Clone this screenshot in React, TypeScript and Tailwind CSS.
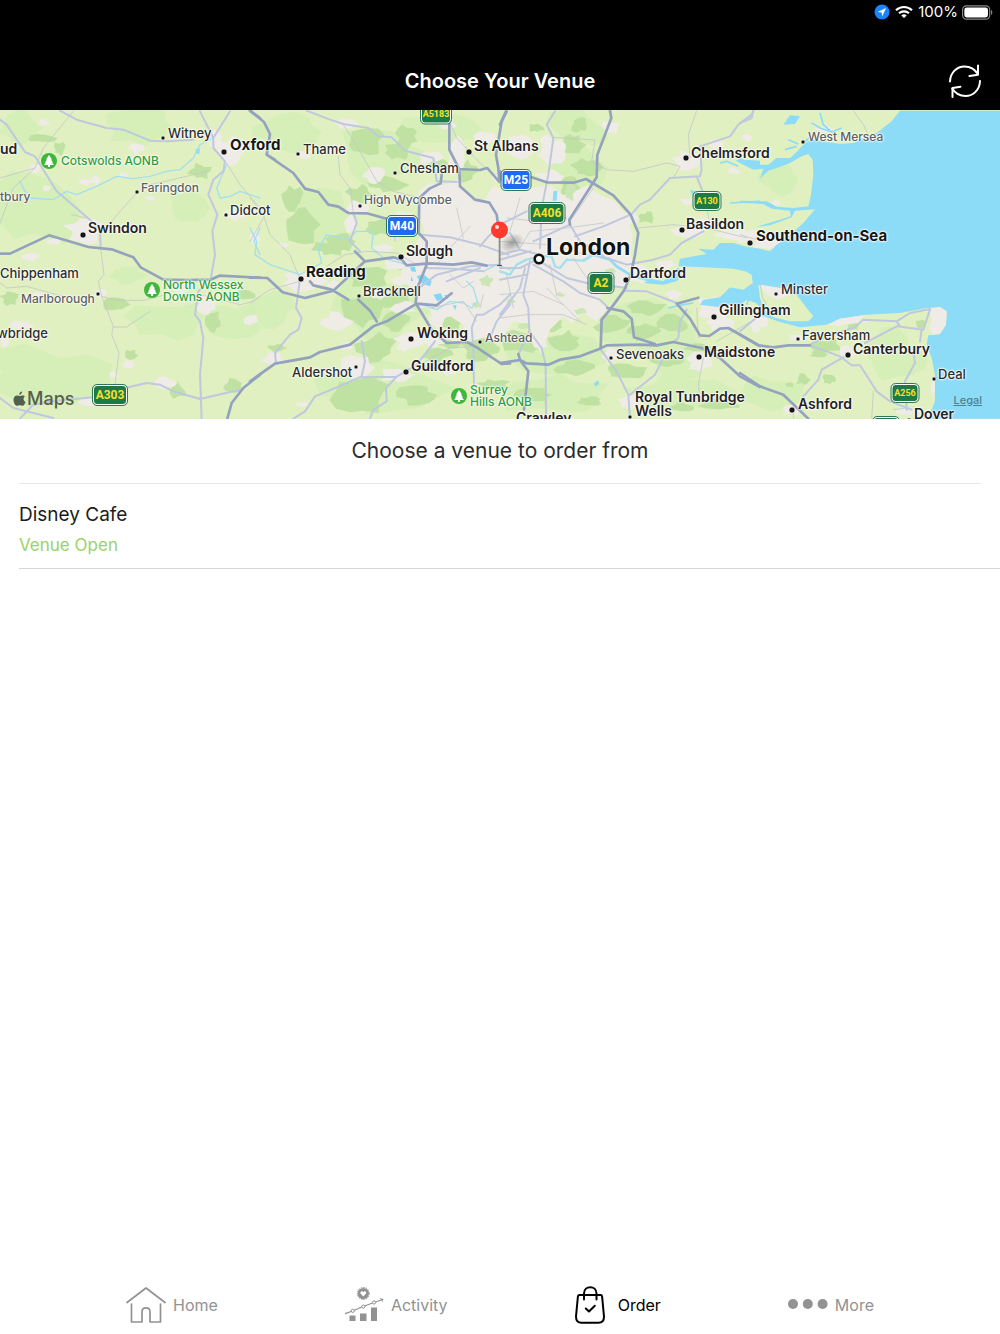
import type { ReactNode } from "react";

type Blob = [cx: number, cy: number, rx: number, ry: number];

/* Each tile is drawn on a grid three times finer than the map itself. */
const TILE_X = [0, 250, 500, 740];

function Tile({ n, children }: { n: number; children: ReactNode }) {
  return <g transform={`translate(${TILE_X[n]} -2) scale(0.33333)`}>{children}</g>;
}

function blobPath([cx, cy, rx, ry]: Blob, i: number) {
  const pts: string[] = [];
  const count = 13;
  for (let k = 0; k < count; k++) {
    const a = (k / count) * Math.PI * 2;
    const noise = Math.abs(Math.sin((i + 3) * 12.9898 + k * 78.233 + cx) * 43758.5453) % 1;
    const r = 0.6 + 0.6 * noise;
    pts.push(`${Math.round(cx + Math.cos(a) * rx * r)},${Math.round(cy + Math.sin(a) * ry * r)}`);
  }
  return `M${pts.join("L")}Z`;
}

function Blobs({ items, fill, opacity = 1 }: { items: Blob[]; fill: string; opacity?: number }) {
  return <path d={items.map(blobPath).join("")} fill={fill} opacity={opacity} />;
}

const MEADOW: Blob[][] = [
  [[90, 300, 150, 110], [160, 810, 220, 100], [420, 60, 120, 60], [520, 640, 130, 60], [60, 60, 60, 60], [380, 500, 60, 30], [700, 640, 90, 60], [560, 300, 60, 60]],
  [[120, 70, 120, 60], [560, 60, 130, 50], [210, 330, 110, 90], [60, 600, 90, 60], [400, 140, 140, 90], [400, 600, 170, 110], [420, 840, 200, 90]],
  [[230, 60, 90, 60], [230, 180, 80, 90], [200, 740, 170, 70], [440, 640, 170, 70], [520, 720, 120, 90], [560, 860, 180, 60], [160, 860, 160, 60]],
  [[120, 210, 70, 50], [460, 740, 90, 80], [80, 860, 110, 60]],
];

const FOREST: Blob[][] = [
  [[600, 190, 35, 24], [350, 590, 40, 22], [395, 742, 18, 20], [130, 90, 50, 12], [30, 570, 30, 24], [640, 640, 26, 34], [530, 850, 26, 26], [700, 835, 30, 22], [740, 560, 40, 16], [180, 120, 18, 22]],
  [
    [350, 100, 55, 40], [470, 85, 34, 32], [130, 270, 34, 40], [160, 350, 50, 60], [270, 400, 45, 32], [330, 260, 40, 28], [420, 230, 60, 26],
    [440, 130, 40, 26], [560, 170, 30, 16], [390, 360, 40, 24], [240, 420, 50, 24], [350, 510, 60, 40], [330, 610, 70, 50], [440, 570, 45, 40],
    [380, 720, 60, 46], [330, 860, 90, 60], [440, 640, 40, 30], [600, 640, 46, 30], [560, 740, 46, 26], [500, 860, 60, 30], [700, 720, 60, 40],
    [590, 700, 50, 22], [650, 190, 34, 34], [730, 830, 50, 18], [80, 720, 30, 12], [460, 470, 30, 16],
  ],
  [
    [220, 110, 34, 34], [260, 180, 44, 32], [210, 240, 30, 36], [240, 50, 30, 22], [440, 330, 24, 18], [60, 700, 60, 40], [200, 700, 50, 30],
    [340, 650, 60, 26], [440, 600, 60, 22], [520, 650, 50, 30], [430, 670, 50, 26], [220, 780, 60, 22], [380, 790, 60, 22], [600, 720, 46, 14],
    [500, 760, 50, 20], [100, 860, 60, 22], [270, 880, 40, 16], [160, 650, 30, 20], [550, 900, 40, 16], [110, 60, 24, 14], [660, 890, 60, 18],
  ],
  [[260, 715, 44, 24], [340, 655, 22, 12], [190, 815, 24, 18], [268, 812, 20, 18], [240, 740, 30, 12], [540, 650, 16, 14], [150, 830, 14, 8]],
];

const TOWN: Blob[][] = [
  [
    [255, 365, 60, 46], [690, 130, 40, 44], [640, 90, 24, 26], [410, 120, 22, 18], [285, 215, 16, 14], [255, 222, 18, 10], [370, 200, 16, 10],
    [105, 180, 22, 14], [140, 240, 14, 10], [85, 447, 30, 12], [160, 400, 22, 10], [490, 825, 36, 18], [620, 590, 34, 30], [755, 635, 26, 18],
    [385, 770, 18, 14], [60, 650, 44, 12], [270, 880, 40, 18], [300, 560, 20, 14], [700, 320, 34, 18], [130, 45, 24, 10], [340, 800, 14, 12],
    [120, 560, 22, 8], [450, 270, 16, 8], [540, 545, 24, 10], [15, 700, 20, 20],
  ],
  [
    [160, 520, 70, 34], [480, 460, 80, 30], [460, 600, 40, 20],
    [260, 640, 50, 30], [320, 780, 60, 40], [480, 700, 50, 32], [440, 800, 50, 24], [70, 755, 36, 22], [330, 300, 44, 22], [370, 200, 34, 24],
    [620, 140, 34, 60], [540, 150, 40, 18], [290, 50, 34, 18], [160, 140, 24, 14], [590, 50, 34, 16], [300, 350, 20, 30], [550, 700, 40, 16],
    [15, 390, 16, 26], [700, 90, 34, 26], [400, 420, 36, 14], [390, 560, 30, 14], [290, 715, 22, 12], [160, 890, 20, 8], [600, 790, 30, 14], [100, 410, 16, 8],
    [450, 520, 30, 14], [250, 530, 26, 12], [460, 330, 40, 20], [560, 640, 30, 20], [620, 690, 40, 14],
  ],
  [
    [400, 500, 50, 30], [160, 130, 46, 50], [60, 110, 50, 40], [330, 60, 30, 20], [560, 160, 40, 34], [650, 110, 24, 16], [560, 370, 50, 20], [610, 350, 34, 18],
    [640, 600, 60, 36], [660, 650, 40, 24], [600, 760, 44, 34], [330, 740, 24, 24], [390, 880, 34, 24], [120, 700, 24, 34], [560, 280, 20, 12],
    [390, 330, 24, 22], [520, 560, 30, 14], [700, 380, 50, 14], [500, 470, 30, 14], [700, 190, 20, 10], [20, 210, 40, 24], [150, 205, 40, 20],
  ],
  [
    [15, 385, 50, 24], [80, 408, 44, 16], [320, 730, 26, 22], [155, 905, 30, 20], [50, 640, 30, 30], [170, 690, 30, 12], [110, 285, 14, 10], [500, 910, 30, 14],
    [578, 840, 8, 30], [320, 640, 60, 10], [20, 90, 16, 14], [220, 900, 20, 10], [250, 65, 30, 12],
  ],
];

const MOTORWAYS: string[] = [
  "M0,437 L30,437 147,382 265,417 335,424 400,448 422,478 490,515 560,516 632,515 658,503 780,509 M780,800 L730,840 695,885 682,932 M750,8 L780,30",
  "M0,8 L42,42 60,78 50,140 130,195 165,242 205,252 235,290 265,296 295,315 350,316 410,332 M0,509 L52,510 98,553 165,570 250,548 345,460 430,448 455,455 470,472 535,466 610,470 665,463 710,473 M50,140 L75,155 M180,520 L190,532 245,545 295,575 M315,430 L345,460 M0,820 L75,767 180,748 210,732 300,710 370,655 410,640 500,587 560,592 605,556 M325,575 L360,608 380,640 M598,40 L598,125 628,185 630,235 675,275 718,284 740,320 745,355 M628,183 L690,186 712,180 748,222 745,180 738,140 755,40 770,10 M575,200 L572,226 538,242 508,270 506,375 530,400 530,470 502,540 497,585 545,665 590,705 650,702 680,718 755,768 780,766",
  "M0,765 L60,756 80,766 145,770 180,755 240,745 300,722 320,712 420,710 470,712 520,702 605,720 M55,738 L60,756 85,790 72,905 M95,208 L140,223 220,224 258,213 340,262 392,320 415,375 405,440 392,500 372,548 330,605 305,635 302,720 M330,8 L334,30 292,140 290,208 208,335 210,350 M322,600 L370,610 395,632 402,688 465,708 M530,587 L595,569 M530,587 L570,632 600,682 628,684 660,662 685,660 780,714 M605,720 L660,750 720,805 780,837 M0,50 L18,10 M0,190 L5,215",
  "M0,680 L55,712 100,718 145,712 210,712 M0,795 L60,835 130,860 205,932",
];

const MAIN_ROADS: string[] = [
  "M0,35 L20,50 75,132 105,145 130,185 170,250 275,340 300,370 302,420 M605,932 L600,800 610,690 600,640 585,620 595,550 632,515 645,440 637,370 652,320 625,260 640,215 670,190 675,160 640,120 640,90 600,10 M690,10 L640,90 M180,8 L230,35 320,60 370,65 450,98 M450,98 L500,100 580,95 M385,838 L440,825 480,830 520,850 600,873 720,845 M60,932 L100,890 150,880 280,868 M0,870 L40,900 160,930",
  "M170,8 L240,35 280,48 355,60 385,85 425,88 465,128 550,150 560,220 620,222 M330,430 L300,400 320,345 310,315 M150,515 L138,600 155,630 145,665 120,680 75,735 78,765 M335,700 L345,760 335,805 280,830 195,865 165,910 130,932 M335,808 L440,806 500,770 555,700 M440,806 L408,840 410,880 370,905 360,932 M670,720 L672,830 M510,380 L600,388 690,410 775,440 M690,415 L720,380 755,350 M500,545 L560,500 660,475 750,470 M590,520 L690,480 M780,560 L750,590 700,620 680,620 665,660 670,720 M530,480 L610,482 700,490 M780,590 L740,640 720,690",
  "M165,10 L140,50 160,90 145,200 125,300 120,420 M0,350 L80,310 M0,440 L60,425 120,440 M30,375 L60,425 M120,460 L200,510 260,525 380,540 M100,470 L190,520 240,555 300,575 325,600 M90,460 L70,560 85,600 88,670 55,740 M88,670 L125,720 137,770 138,932 M75,480 L60,540 0,620 M210,350 L240,400 320,450 380,470 460,455 510,440 545,405 610,370 M225,385 L310,355 392,320 M210,350 L100,400 M395,318 L420,290 450,275 510,210 600,205 605,185 600,115 M600,115 L690,85 715,50 755,20 760,8 M590,205 L612,260 M380,548 L440,550 530,585 M560,605 L540,640 535,690 520,702 M300,722 L350,790 385,860 390,932 M390,860 L465,800 490,750 M0,480 L60,480 110,455 M0,515 L80,500 M0,455 L90,430",
  "M210,710 L260,685 340,660 370,635 470,640 510,615 570,603 M375,705 L470,655 550,665 570,605 M470,640 L480,655 M545,665 L540,700 M210,712 L300,745 335,772 360,772 410,850 450,880 515,905 M500,905 L495,820 525,765 518,720 M310,748 L245,785 235,815 190,865 M0,45 L35,30 40,8 M0,670 L45,632",
];

const LANES: string[] = [
  "M220,10 L130,120 105,180 40,240 0,345 M302,420 L312,500 295,520 305,565 340,655 335,680 357,735 345,830 M0,525 L20,540 80,535 140,552 190,565 M305,565 L350,577 430,577 490,562 M340,657 L380,657 450,610 M302,380 L360,310 410,255 M430,235 L560,205 620,190 M600,560 L680,580 720,590 760,580 780,565 M680,165 L720,230 780,300 M105,180 L0,210 M215,320 L260,330",
  "M0,270 L40,320 60,380 120,440 150,515 M280,50 L330,130 380,220 430,250 510,270 M230,475 L285,440 350,430 440,435 500,470 M0,585 L60,545 150,520 M265,145 L270,200 300,240 310,315 M430,330 L435,400 M600,45 L620,90 690,165 740,210 M560,470 L600,420 660,355 M540,600 L640,580 680,640 M0,400 L40,330 M510,770 L600,720 680,715 M620,300 L640,390 M700,560 L690,600 M600,500 L640,540 670,520",
  "M160,88 L285,96 275,160 320,185 400,190 500,165 540,175 520,210 M590,8 L565,80 570,150 M415,360 L520,350 M620,300 L628,340 M520,350 L620,360 740,390 M0,400 L140,410 M280,240 L210,340 M0,630 L80,620 190,620 260,650 M140,540 L240,640 M590,600 L595,690 M650,700 L780,625 M610,750 L595,830 600,870 M20,330 L110,340 200,330 M60,270 L30,370 M150,470 L170,560 M220,450 L260,510 M0,560 L100,550 190,590 M20,500 L40,600 M190,420 L260,440 330,450 M60,420 L90,370 200,360 310,345",
  "M340,8 L370,50 385,80 M0,380 L50,395 M400,850 L395,932 M60,530 L68,570 80,590 M160,910 L160,932 M460,905 L500,900",
];

const RIVERS: string[] = [
  "M60,220 L75,250 90,270 160,275 200,250 230,260 290,235 350,205 400,212 450,205 500,190 540,185 580,150 600,110 640,90 M680,170 L650,240 660,270 690,265 720,250 780,270 M780,360 L762,400 780,440",
  "M0,360 L20,400 15,440 60,470 150,500 M150,500 L215,465 205,425 230,380 290,395 320,370 370,370 365,420 400,450 470,470 M515,590 L560,605 600,580 640,585 665,600 682,580 670,540 650,520 M700,490 L740,470 780,485",
  "M0,490 L30,500 50,470 80,455 120,445 155,445 165,475 180,480 200,455 250,458 280,440",
  "",
];

function MapArt() {
  return (
    <svg viewBox="0 0 1000 309" preserveAspectRatio="none" className="absolute inset-0 h-full w-full" aria-hidden="true">
      <rect width="1000" height="309" fill="#e0f0c0" />
      {TILE_X.map((x, n) => (
        <Tile key={x} n={n}>
          <Blobs items={MEADOW[n]} fill="#cfecb2" opacity={0.6} />
        </Tile>
      ))}
      {TILE_X.map((x, n) => (
        <Tile key={x} n={n}>
          <Blobs items={FOREST[n]} fill="#bfe2a3" />
        </Tile>
      ))}
      {TILE_X.map((x, n) => (
        <Tile key={x} n={n}>
          {TOWN[n].map((b, i) => (
            <path key={i} d={blobPath(b, i)} fill="#efece7" />
          ))}
        </Tile>
      ))}
      {/* Greater London and its parks */}
      <Tile n={2}>
        <path
          fill="#efece7"
          d="M-245,250 L-210,225 -170,232 -130,215 -90,262 -50,280 -20,235 30,240 60,225 100,240 150,232 190,262 225,250 262,232 300,262 345,280 380,325 398,380 390,440 415,480 370,540 320,545 290,575 325,600 290,640 250,615 215,645 190,625 150,665 130,720 100,690 90,650 40,640 0,700 -50,690 -90,700 -110,650 -150,625 -190,640 -215,600 -245,600 -260,540 -300,520 -290,470 -240,450 -250,400 -225,370 -245,320Z"
        />
        <Blobs items={[[210, 250, 16, 30], [30, 580, 14, 10], [-42, 520, 20, 18], [-70, 590, 14, 10], [180, 560, 14, 8], [70, 655, 20, 10], [330, 490, 20, 8], [240, 610, 18, 10]]} fill="#cbe6b4" />
      </Tile>

      {/* North Sea and the Thames estuary */}
      <Tile n={3}>
        <path
          fill="#8cdcf8"
          d="M480,8 L455,40 410,75 380,85 340,105 300,108 250,100 215,92 190,110 170,132 150,150 110,150 85,170 50,170 20,158 0,150 -12,158 10,170 40,185 70,182 60,212 85,188 110,180 150,165 185,145 205,138 218,155 220,200 213,260 205,295 160,300 110,296 80,280 0,278 0,284 70,288 95,302 150,308 152,325 120,335 50,356 90,352 155,328 165,308 225,304 190,345 150,380 110,410 90,430 60,422 20,416 -20,405 -60,405 -80,425 -125,422 -100,438 -180,452 -185,478 -230,520 -270,516 -290,525 -230,530 -190,520 -150,480 -80,480 0,490 30,498 38,525 10,545 -30,538 -60,568 -110,575 -120,590 -60,598 -20,588 0,592 20,575 48,585 60,600 50,620 80,628 120,642 180,658 260,650 300,632 380,620 480,615 560,600 600,597 620,610 618,650 600,678 565,682 560,710 575,750 585,800 585,880 575,905 560,932 780,932 780,8Z"
        />
        <path fill="#e0f0c0" d="M-190,475 L-110,478 -20,482 15,490 35,500 38,525 12,542 -30,538 -60,550 -130,545 -190,520 -165,500Z" />
        <path fill="#e0f0c0" d="M55,530 L120,540 170,560 200,600 220,625 205,640 150,640 100,628 70,600 60,570Z" />
        <path fill="#efece7" d="M60,530 L120,540 150,562 110,575 80,560Z M568,602 L600,597 620,610 618,650 600,678 578,680 568,660 575,635Z M265,650 L300,632 380,620 360,632 300,655Z" />
        <path fill="none" stroke="#8cdcf8" strokeWidth="5" d="M240,15 L250,50 275,72 305,60 M215,45 L240,60 285,75 M145,95 L175,108 M135,125 L170,115 M225,75 L190,105 M30,560 L20,590 M-215,600 L-170,590 -140,585 M-5,175 L-40,160 -60,165" />
        <path fill="#8cdcf8" d="M130,50 L150,22 180,25 165,48Z" />
      </Tile>
      <Tile n={2}>
        <path d="M250,458 L280,440 330,455 350,475 390,500 M390,500 L440,515 500,525" fill="none" stroke="#8cdcf8" strokeWidth="8" />
        <path d="M160,250 L172,248 170,278 158,278Z M282,826 L294,817 298,828 286,836Z M570,245 L600,255 580,268Z M735,155 L780,158 780,180 750,178Z" fill="#8cdcf8" />
        <path d="M690,285 L780,280" stroke="#8cdcf8" strokeWidth="5" />
      </Tile>
      <Tile n={1}>
        <path d="M480,478 L495,476 498,492 484,490Z M500,505 L520,498 545,520 540,535 512,525Z M550,560 L572,556 580,572 562,580Z M582,562 L596,560 594,574Z M608,592 L620,592 616,606Z M484,505 L490,520 482,518Z" fill="#7fd8f8" />
      </Tile>
      <Tile n={0}>
        <path d="M588,122 L600,122 598,138 586,136Z" fill="#8cdcf8" />
      </Tile>

      <g fill="none" strokeLinejoin="round" strokeLinecap="round">
        {TILE_X.map((x, n) => (
          <Tile key={x} n={n}>
            <path d={RIVERS[n]} stroke="#a5dfee" strokeWidth={n === 2 ? 7 : 4} />
            <path d={LANES[n]} stroke="#c3c6ca" strokeWidth="3" opacity="0.8" />
            <path d={MAIN_ROADS[n]} stroke="#bfc8de" strokeWidth="6" />
          </Tile>
        ))}
        {TILE_X.map((x, n) => (
          <Tile key={x} n={n}>
            <path d={MOTORWAYS[n]} stroke="#94a2be" strokeWidth="8" />
          </Tile>
        ))}
      </g>

      {/* Town markers */}
      <g fill="#151515">
        {DOTS.map(([x, y, r]) => (
          <circle key={`${x}-${y}`} cx={x} cy={y} r={r} stroke="#fff" strokeOpacity="0.6" strokeWidth="1" />
        ))}
      </g>
      <circle cx="539" cy="149" r="4.3" fill="#fff" stroke="#111" strokeWidth="2.6" />

      {/* Park markers */}
      {PARKS.map(([x, y]) => (
        <g key={x} transform={`translate(${x} ${y})`}>
          <circle r="8" fill="#3fb73c" />
          <path d="M0,-6 L3,-1.5 H2 L4,1.5 H3 L5,4 H1 V6 H-1 V4 H-5 L-3,1.5 H-4 L-2,-1.5 H-3Z" fill="#fff" />
        </g>
      ))}

      {/* Dropped pin */}
      <defs>
        <radialGradient id="pinShadow">
          <stop offset="0" stopColor="#555" stopOpacity="0.5" />
          <stop offset="1" stopColor="#555" stopOpacity="0" />
        </radialGradient>
      </defs>
      <ellipse cx="512" cy="133" rx="13" ry="9" fill="url(#pinShadow)" transform="rotate(-25 512 133)" />
      <rect x="498.7" y="126" width="1.8" height="29" fill="#8b8b8b" />
      <path d="M497,155.5 H502" stroke="#555" strokeWidth="1.2" />
      <circle cx="499.5" cy="120" r="8.5" fill="#ff3b30" />
      <circle cx="497" cy="117" r="2" fill="#fff" opacity="0.85" />
    </svg>
  );
}

const DOTS: [number, number, number][] = [
  [163, 28, 2], [224, 42, 3], [298, 44, 2], [395, 63, 2], [469, 42, 3], [686, 48, 3], [803, 32, 2], [137, 82, 2], [83, 125, 3],
  [226, 105, 2], [360, 96, 2], [682, 120, 3], [750, 133, 3], [401, 147, 3], [301, 169, 3], [359, 186, 2], [626, 170, 3], [776, 184, 2],
  [714, 207, 3], [98, 184, 2], [411, 229, 3], [480, 232, 2], [406, 262, 3], [356, 257, 2], [611, 248, 2], [699, 247, 3], [798, 229, 2],
  [848, 245, 3], [934, 269, 2], [909, 310, 2], [792, 300, 3], [630, 307, 2],
];

const PARKS: [number, number][] = [[49, 51], [152, 180], [459, 286]];

type Kind = "minor" | "town" | "large" | "major" | "city" | "park";

const KIND: Record<Kind, string> = {
  minor: "text-[12px] leading-[14px] font-medium text-[#5c5f5e]",
  town: "text-[13px] leading-[14px] font-medium text-[#2b2d2d]",
  large: "text-[14px] leading-[14px] font-semibold text-[#1f2121]",
  major: "text-[15px] leading-[14px] font-bold text-[#151717]",
  city: "text-[23px] leading-[24px] font-bold text-[#111313]",
  park: "text-[12px] leading-[12px] font-medium text-[#2f9e3a]",
};

const LABELS: [string, number, number, Kind][] = [
  ["ud", 0, 39, "large"], ["Witney", 168, 23, "town"], ["Oxford", 230, 35, "major"], ["Thame", 303, 39, "town"],
  ["Chesham", 400, 58, "town"], ["St Albans", 474, 36, "large"], ["Chelmsford", 691, 43, "large"], ["West Mersea", 808, 27, "minor"],
  ["Cotswolds AONB", 61, 51, "park"], ["Faringdon", 141, 78, "minor"], ["tbury", 0, 87, "minor"], ["Swindon", 88, 118, "large"],
  ["Didcot", 230, 100, "town"], ["High Wycombe", 364, 90, "minor"], ["Basildon", 686, 114, "large"], ["Southend-on-Sea", 756, 126, "major"],
  ["London", 546, 137, "city"], ["Slough", 406, 141, "large"], ["Reading", 306, 162, "major"], ["Bracknell", 363, 181, "town"],
  ["Dartford", 630, 163, "large"], ["Minster", 781, 179, "town"], ["Gillingham", 719, 200, "large"], ["Chippenham", 0, 163, "town"],
  ["Marlborough", 21, 189, "minor"], ["North Wessex\nDowns AONB", 163, 181, "park"], ["wbridge", -3, 223, "town"], ["Woking", 417, 223, "large"],
  ["Ashtead", 485, 228, "minor"], ["Guildford", 411, 256, "large"], ["Aldershot", 292, 262, "town"], ["Sevenoaks", 616, 244, "town"],
  ["Maidstone", 704, 242, "large"], ["Faversham", 802, 225, "town"], ["Canterbury", 853, 239, "large"], ["Deal", 938, 264, "town"],
  ["Dover", 914, 304, "large"], ["Ashford", 798, 294, "large"], ["Royal Tunbridge\nWells", 635, 294, "large"],
  ["Surrey\nHills AONB", 470, 286, "park"], ["Crawley", 516, 308, "large"],
];

const SHIELDS: [string, number, number, string][] = [
  ["A5183", 436, 4, "h-[17px] w-[28px] bg-[#1d7a45] text-[9px] text-[#f6e02c]"],
  ["M25", 516, 70, "h-[18px] w-[27px] bg-[#1f6bf0] text-[12px] text-white"],
  ["M40", 402, 116, "h-[18px] w-[28px] bg-[#1f6bf0] text-[12px] text-white"],
  ["A406", 547, 103, "h-[18px] w-[33px] bg-[#1d7a45] text-[12px] text-[#f6e02c]"],
  ["A130", 707, 91, "h-[16px] w-[25px] bg-[#1d7a45] text-[9px] text-[#f6e02c]"],
  ["A2", 601, 173, "h-[18px] w-[23px] bg-[#1d7a45] text-[12px] text-[#f6e02c]"],
  ["A303", 110, 285, "h-[18px] w-[32px] bg-[#1d7a45] text-[12px] text-[#f6e02c]"],
  ["A256", 905, 283, "h-[16px] w-[25px] bg-[#1d7a45] text-[9px] text-[#f6e02c]"],
  ["", 886, 316, "h-[16px] w-[24px] bg-[#1d7a45]"],
];

function VenueMap() {
  return (
    <section aria-label="Map of venues" className="relative aspect-[1000/309] w-full overflow-hidden bg-[#e0f0c0]">
      <MapArt />
      {LABELS.map(([text, x, y, kind]) => (
        <span
          key={text}
          className={`absolute -translate-y-1/2 whitespace-pre [text-shadow:0_0_2px_#fff,0_0_2px_#fff,0_0_1px_#fff,0_0_3px_#fff] ${KIND[kind]}`}
          style={{ left: `${x / 10}%`, top: `${(y / 309) * 100}%` }}
        >
          {text}
        </span>
      ))}
      {SHIELDS.map(([text, x, y, look]) => (
        <span
          key={text || "edge"}
          className={`absolute box-content flex -translate-x-1/2 -translate-y-1/2 items-center justify-center rounded-[4px] border border-white font-[Roboto,sans-serif] leading-none font-bold outline outline-1 outline-[#34755a] ${look}`}
          style={{ left: `${x / 10}%`, top: `${(y / 309) * 100}%` }}
        >
          {text}
        </span>
      ))}
      <div className="absolute bottom-[10px] left-[13px] flex items-center text-[#54604e]">
        <svg viewBox="0 0 14 17" className="h-[16px] w-[13px]" fill="currentColor" aria-hidden="true">
          <path d="M9.8 0.5C9.9 2.4 8.3 4.1 6.7 4.1C6.5 2.3 8.1 0.7 9.8 0.5ZM12.9 5.9C10.6 7.3 11 10.7 13.5 11.7C13 13.2 11.7 15.8 10.2 15.9C9.1 15.9 8.7 15.2 7.3 15.2C5.9 15.2 5.4 15.9 4.4 15.9C2.3 15.9 0.4 12.2 0.5 9.3C0.6 6.3 2.5 4.7 4.3 4.7C5.5 4.7 6.4 5.4 7.2 5.4C8 5.4 9 4.6 10.5 4.6C11.4 4.6 12.4 5.1 12.9 5.9Z" />
        </svg>
        <span className="pl-px text-[18px] leading-[20px] font-medium">Maps</span>
      </div>
      <a href="#legal" className="absolute right-[18px] bottom-[12px] text-[11px] leading-[14px] font-medium text-[#4f7f92] underline">
        Legal
      </a>
    </section>
  );
}

function StatusBar() {
  return (
    <div className="flex h-6 items-center justify-end gap-[5px] pr-[7px] text-white">
      <svg viewBox="0 0 16 16" className="size-[16px]" aria-label="Location in use">
        <circle cx="8" cy="8" r="7.5" fill="#1a84ff" />
        <path d="M12 4 L3.6 7.9 L7.7 8.4 L8.2 12.4Z" fill="#fff" />
      </svg>
      <svg viewBox="0 0 18 14" className="h-[14px] w-[18px]" fill="none" stroke="currentColor" strokeWidth="2.2" aria-label="Wi-Fi">
        <path d="M1 5.2C5.5 0.9 12.5 0.9 17 5.2" />
        <path d="M4 8.3C6.8 5.6 11.2 5.6 14 8.3" />
        <path d="M9 13L6.3 10.4C7.8 9 10.2 9 11.7 10.4Z" fill="currentColor" stroke="none" />
      </svg>
      <span className="text-[15px] leading-5">100%</span>
      <svg viewBox="0 0 32 15" className="-ml-px h-[15px] w-[31px]" aria-label="Battery full">
        <rect x="0.6" y="0.6" width="28" height="13.8" rx="4" fill="none" stroke="#8a8a8a" strokeWidth="1.2" />
        <rect x="2.4" y="2.4" width="24.4" height="10.2" rx="2.4" fill="#fff" />
        <path d="M30 5C31.7 5.5 31.7 9.5 30 10Z" fill="#8a8a8a" />
      </svg>
    </div>
  );
}

function HomeIcon() {
  return (
    <svg viewBox="0 0 40 36" className="h-[36px] w-[40px]" fill="none" stroke="currentColor" strokeWidth="1.7" strokeLinecap="round" strokeLinejoin="round" aria-hidden="true">
      <path d="M1 15.5L20 1L39 15.5" />
      <path d="M5.5 17V35H16V25C16 19.5 24 19.5 24 25V35H34.5V17" />
    </svg>
  );
}

function ActivityIcon() {
  return (
    <svg viewBox="0 0 40 36" className="h-[36px] w-[40px]" fill="currentColor" aria-hidden="true">
      <circle cx="18.3" cy="6.5" r="5.6" />
      <circle cx="18.3" cy="6.5" r="6" fill="none" stroke="currentColor" strokeWidth="1" strokeDasharray="1.5 1" />
      <path d="M18.3 9.5L15.5 6.5C14.8 4.5 17.5 3.5 18.3 5.3C19.1 3.5 21.800 4.5 21.1 6.5Z" fill="#fff" />
      <path d="M4.500 28.500H10.500V34H4.500ZM15 26.500H21.500V34H15ZM26 20.500H32V34H26Z" />
      <path d="M-0.5 27L7.500 24L18 19.500L29 15.500L36.5 13" fill="none" stroke="currentColor" strokeWidth="1.3" />
      <path d="M34.5 11L38.5 12L37 15.5L36.6 13.3Z" />
      <g fill="#fff" stroke="currentColor" strokeWidth="1">
        <circle cx="7.8" cy="23.8" r="1.6" />
        <circle cx="18.3" cy="19.6" r="1.6" />
        <circle cx="29" cy="15.5" r="1.6" />
      </g>
    </svg>
  );
}

function OrderIcon() {
  return (
    <svg viewBox="0 0 30 38" className="h-[38px] w-[30px]" fill="none" stroke="currentColor" strokeWidth="2" strokeLinecap="round" strokeLinejoin="round" aria-hidden="true">
      <path d="M4.5 9H25.5C26.5 9 27 9.5 27.1 10.5L29 30.5C29 34.5 27 36.8 23.5 36.8H6.5C3 36.8 1 34.5 1 30.5L2.9 10.5C3 9.5 3.5 9 4.5 9Z" />
      <path d="M9 13.5V7.5C9 -0.8 21.5 -0.8 21.5 7.5V13.5" />
      <path d="M10.8 22.5L14 25.5L19.8 19.8" />
    </svg>
  );
}

function MoreIcon() {
  return (
    <svg viewBox="0 0 40 36" className="h-[36px] w-[40px]" fill="currentColor" aria-hidden="true">
      <circle cx="5" cy="17" r="5" />
      <circle cx="19.8" cy="17" r="5" />
      <circle cx="34.6" cy="17" r="5" />
    </svg>
  );
}

const TABS = [
  { label: "Home", icon: <HomeIcon />, look: "gap-[7px] text-[#929292]" },
  { label: "Activity", icon: <ActivityIcon />, look: "gap-[6px] text-[#929292]" },
  { label: "Order", icon: <OrderIcon />, look: "gap-[13px] text-black" },
  { label: "More", icon: <MoreIcon />, look: "gap-[7px] text-[#929292]" },
];

export default function App() {
  return (
    <div className="flex min-h-screen flex-col bg-white font-['Inter','Liberation_Sans',sans-serif]">
      <header className="bg-black text-white">
        <StatusBar />
        <div className="grid h-[86px] grid-cols-[1fr_auto_1fr] items-center px-[18px] pt-[28px] pb-px">
          <h1 className="col-start-2 text-[20px] leading-6 font-semibold">Choose Your Venue</h1>
          <button type="button" aria-label="Refresh" className="justify-self-end">
            <svg viewBox="0 0 34 34" className="size-[34px]" fill="none" stroke="currentColor" strokeWidth="2" strokeLinecap="round" strokeLinejoin="round">
              <path d="M2 17.5C2.2 8.5 9 2.5 16.5 2.5C22 2.5 27 5.5 29.8 10" />
              <path d="M30 1.5V10.7L21.5 12" />
              <path d="M32 17C31.8 26 25 32 17.5 32C12 32 7 29 4.2 24.5" />
              <path d="M4.5 33V24L12.5 22.7" />
            </svg>
          </button>
        </div>
      </header>

      <main className="flex-1">
        <VenueMap />
        <h2 className="mx-[19px] border-b border-[#e6e6e6] py-[18px] text-center text-[21px] leading-7 font-normal text-[#2b2b2b]">
          Choose a venue to order from
        </h2>
        <ul>
          <li className="ml-[19px] border-b border-[#d4d6da]">
            <button type="button" className="block w-full pt-[17px] pb-[11px] text-left">
              <span className="block text-[19px] leading-7 text-[#1c1c1c]">Disney Cafe</span>
              <span className="mt-1 block text-[17px] leading-6 text-[#9bd267]">Venue Open</span>
            </button>
          </li>
        </ul>
      </main>

      <nav aria-label="Main" className="flex h-[60px] items-center justify-between px-[12.6%] pt-px">
        {TABS.map((tab) => (
          <button key={tab.label} type="button" aria-current={tab.label === "Order" ? "page" : undefined} className={`flex items-center text-[16px] leading-6 ${tab.look}`}>
            {tab.icon}
            <span>{tab.label}</span>
          </button>
        ))}
      </nav>
    </div>
  );
}
